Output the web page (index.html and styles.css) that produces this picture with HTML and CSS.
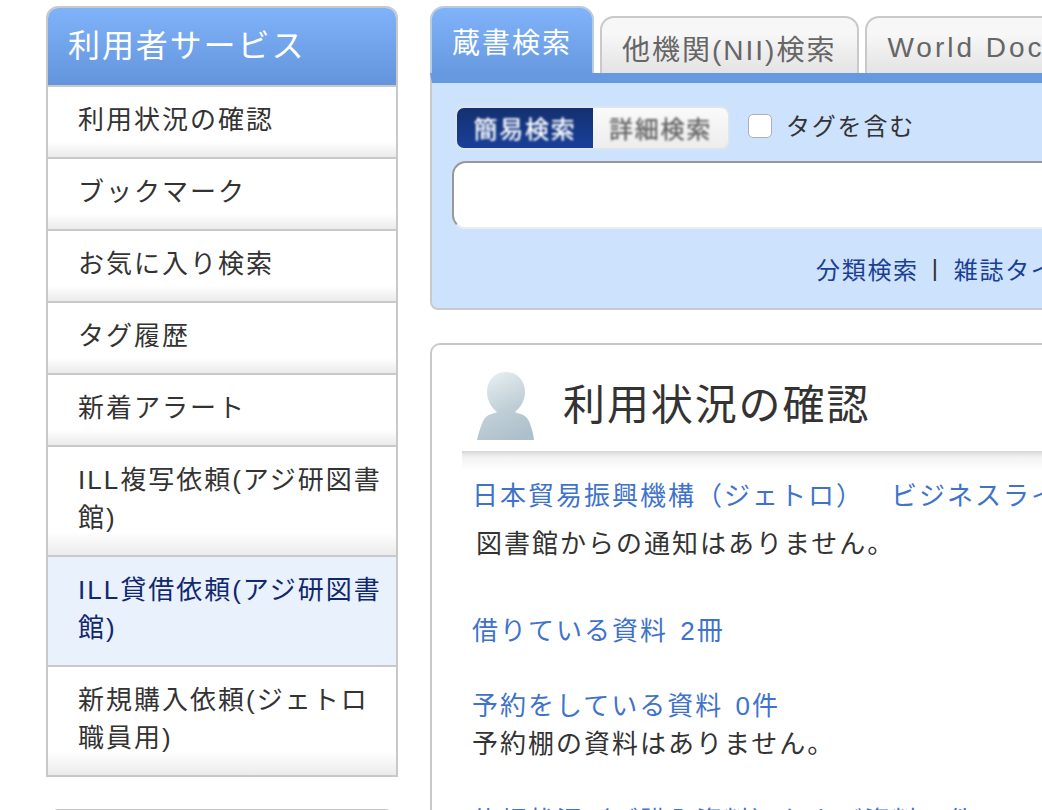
FILE: index.html
```html
<!DOCTYPE html>
<html lang="ja">
<head>
<meta charset="utf-8">
<title>利用状況の確認</title>
<link rel="stylesheet" href="styles.css">
</head>
<body>
<div class="page">
  <aside class="side">
    <section class="menu">
      <h2 class="menu-head">利用者サービス</h2>
      <ul class="menu-list">
        <li class="menu-item">利用状況の確認</li>
        <li class="menu-item">ブックマーク</li>
        <li class="menu-item">お気に入り検索</li>
        <li class="menu-item">タグ履歴</li>
        <li class="menu-item">新着アラート</li>
        <li class="menu-item">ILL複写依頼(アジ研図書館)</li>
        <li class="menu-item is-current">ILL貸借依頼(アジ研図書館)</li>
        <li class="menu-item">新規購入依頼(ジェトロ職員用)</li>
      </ul>
    </section>
    <div class="menu-next"></div>
  </aside>
  <main class="main">
    <nav class="tabs">
      <div class="tab is-active">蔵書検索</div>
      <div class="tab">他機関(NII)検索</div>
      <div class="tab tab-latin">World Document Search</div>
    </nav>
    <section class="search">
      <div class="search-opts">
        <div class="toggle">
          <span class="seg seg-on"><span class="seg-text">簡易検索</span></span>
          <span class="seg seg-off"><span class="seg-text">詳細検索</span></span>
        </div>
        <span class="check"></span>
        <span class="check-label">タグを含む</span>
      </div>
      <div class="field"></div>
      <div class="search-links"><a class="search-link">分類検索</a><span class="sep">|</span><a class="search-link">雑誌タイトル検索</a></div>
    </section>
    <section class="status">
      <header class="status-head">
        <svg class="avatar" viewBox="0 0 58 69" width="58" height="69" aria-hidden="true">
          <defs>
            <linearGradient id="av" x1="0.3" y1="0" x2="0.7" y2="1">
              <stop offset="0" stop-color="#e6eef0"/>
              <stop offset="0.55" stop-color="#bfced6"/>
              <stop offset="1" stop-color="#adbfca"/>
            </linearGradient>
          </defs>
          <path fill="url(#av)" d="M29 1C41 1 48 10 48 21C48 30 43 37 38 41C42 43 47 43 50 47C53 51 56 60 57 69L0 69C2 60 5 51 8 47C11 43 16 43 20 41C15 37 10 30 10 21C10 10 17 1 29 1Z"/>
        </svg>
        <h1 class="status-title">利用状況の確認</h1>
      </header>
      <div class="status-rule"></div>
      <div class="status-body">
        <p class="line lib"><a class="link">日本貿易振興機構（ジェトロ）</a><a class="link lib-2">ビジネスライブラリー</a></p>
        <p class="line note">図書館からの通知はありません。</p>
        <p class="line loans"><a class="link">借りている資料 2冊</a></p>
        <p class="line holds"><a class="link">予約をしている資料 0件</a></p>
        <p class="line">予約棚の資料はありません。</p>
        <p class="line more"><a class="link">依頼状況（ご購入資料）および資料の件</a></p>
      </div>
    </section>
  </main>
</div>
</body>
</html>
```
FILE: styles.css
```css
* { box-sizing: border-box; }
html, body { margin: 0; height: 810px; overflow: hidden; background: #fff; }
body {
  font-family: "Liberation Sans", "Noto Sans CJK JP", sans-serif;
  color: #333;
}
h1, h2, p, ul { margin: 0; padding: 0; }
ul { list-style: none; }

.page {
  display: flex;
  gap: 32px;
  width: 1400px;
  padding: 6px 0 0 46px;
  align-items: flex-start;
}

/* sidebar */
.side { flex: 0 0 352px; width: 352px; }
.menu {
  border: 2px solid #c9c9c9;
  border-radius: 12px 12px 0 0;
  overflow: hidden;
}
.menu-head {
  height: 81px;
  margin-top: -2px;
  padding: 0 20px 6px;
  display: flex;
  align-items: center;
  font-size: 32px;
  font-weight: 400;
  letter-spacing: 1.9px;
  color: #fff;
  background: linear-gradient(#80b3fa, #6295dc);
  border-bottom: 2px solid #c9c9c9;
}
.menu-item {
  padding: 14px 10px 18px 30px;
  min-height: 72px;
  font-size: 26px;
  line-height: 38px;
  letter-spacing: 2px;
  background: linear-gradient(#fff 78%, #ebebeb);
  border-bottom: 2px solid #c9c9c9;
}
.menu-item:last-child { border-bottom: 0; min-height: 108px; }
.is-current {
  color: #12286e;
  background: #e8f1fc;
}
.menu-next {
  height: 4px;
  margin: 32px 8px 0;
  border-top: 2px solid #c9c9c9;
  border-radius: 8px 8px 0 0;
}

/* tabs */
.main { flex: 0 0 900px; width: 900px; }
.tabs {
  display: flex;
  gap: 6px;
  align-items: flex-end;
  height: 67px;
}
.tab {
  height: 57px;
  padding: 4px 21px 0 20px;
  display: flex;
  align-items: center;
  font-size: 28px;
  letter-spacing: 2px;
  color: #666;
  white-space: nowrap;
  background: linear-gradient(#f8f7f8 30%, #e3e3e3);
  border: 2px solid #c9c9c9;
  border-bottom: 0;
  border-radius: 14px 14px 0 0;
}
.tab.is-active {
  height: 67px;
  width: 164px;
  flex: none;
  padding: 0 20px;
  color: #fff;
  background: linear-gradient(#80b3fa, #6699e0);
  border-color: #b9cbe2;
}
.tab-latin { letter-spacing: 3px; }

/* search */
.search {
  height: 237px;
  padding: 23px 0 0 20px;
  background: #cde2fd;
  border: 2px solid #c9c9c9;
  border-top: 10px solid #6699e0;
  border-radius: 0 0 0 8px;
}
.search-opts {
  display: flex;
  align-items: center;
  height: 44px;
}
.toggle {
  display: flex;
  height: 44px;
  margin-left: 3px;
  border: 2px solid #dfe4ea;
  border-radius: 9px;
  overflow: hidden;
  font-size: 24px;
  letter-spacing: 1.8px;
}
.seg {
  display: flex;
  align-items: center;
  justify-content: center;
  padding-bottom: 2px;
}
.seg-text { filter: blur(0.8px); }
.seg-on {
  width: 136px;
  color: #fff;
  text-shadow: 0 0 1px #fff;
  background: linear-gradient(#14306f, #183f9a);
}
.seg-off {
  width: 135px;
  color: #666;
  text-shadow: 0 0 1px #666;
  background: linear-gradient(#fafafa, #ededed);
}
.check {
  width: 24px;
  height: 24px;
  margin: 0 0 4px 18px;
  background: #fff;
  border: 1px solid #aab0b8;
  border-radius: 5px;
}
.check-label {
  margin: 0 0 8px 14px;
  font-size: 24px;
  letter-spacing: 1.8px;
  color: #333;
}
.field {
  width: 900px;
  height: 68px;
  margin-top: 11px;
  background: #fff;
  border: 2px solid #e9eef5;
  border-top-color: #989898;
  border-left-color: #989898;
  border-radius: 14px 0 0 14px;
}
.search-links {
  display: flex;
  align-items: center;
  height: 34px;
  margin: 22px 0 0 364px;
  font-size: 24px;
  letter-spacing: 1.7px;
  white-space: nowrap;
}
.search-link { color: #1b3f93; }
.sep { margin: 0 14px 0 13px; color: #333; }

/* status panel */
.status {
  margin-top: 33px;
  height: 520px;
  border: 2px solid #c9c9c9;
  border-radius: 10px 0 0 0;
}
.status-head {
  display: flex;
  align-items: flex-end;
  height: 95px;
  padding-left: 45px;
}
.avatar { flex: none; filter: blur(0.5px); }
.status-title {
  align-self: center;
  margin: 27px 0 0 28px;
  font-size: 42px;
  font-weight: 400;
  letter-spacing: 1.9px;
  color: #333;
  line-height: 60px;
}
.status-rule {
  height: 20px;
  margin: 11px 0 0 30px;
  background: linear-gradient(#d6d6d6, #f2f2f2 30%, #fff);
}
.status-body {
  padding: 6px 0 0 40px;
  font-size: 26px;
  letter-spacing: 2px;
  word-spacing: 3px;
  line-height: 38px;
  white-space: nowrap;
}
.link { color: #3f73cb; }
.lib-2 { margin-left: 27px; }
.note { margin: 10px 0 0 4px; }
.loans { margin-top: 49px; }
.holds { margin-top: 37px; }
.more { margin-top: 39px; }
```
